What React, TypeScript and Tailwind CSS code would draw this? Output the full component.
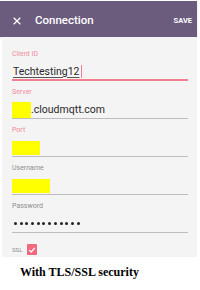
import React from "react";

const FIELDS = [
    { label: "Client ID", kind: "text", value: "Techtesting12", active: true },
    { label: "Server", kind: "server", value: ".cloudmqtt.com" },
    { label: "Port", kind: "box", width: "w-[28px]" },
    { label: "Username", kind: "box", width: "w-[38px]" },
    { label: "Password", kind: "password" },
];

function Field({ field }: { field: (typeof FIELDS)[number] }) {
    const active = !!field.active;
    const pink = active || field.label === "Server" || field.label === "Port";
    return (
        <div className="flex flex-col">
            <div className={"h-[10px] leading-[10px] text-[7px] " + (pink ? "text-[#f28a9a]" : "text-[#8d8d8d]")}>
                {field.label}
            </div>
            <div
                className={
                    "mt-[4px] h-[18px] w-[176px] flex items-center " +
                    (active ? "border-b-2 border-[#f27f8f]" : "border-b-[1.5px] border-[#bdbdbd]")
                }
            >
                {field.kind === "text" && (
                    <span className="ml-[1px] text-[10.5px] leading-[13px] text-[#2a2a2a] underline decoration-[#555] underline-offset-2 border-r border-[#f27f8f] pr-[1px]">
                        {field.value}
                    </span>
                )}
                {field.kind === "server" && (
                    <>
                        <span className="w-[19px] h-[16px] bg-[#ffff00]" />
                        <span className="text-[10.5px] leading-[13px] text-[#2a2a2a]">{field.value}</span>
                    </>
                )}
                {field.kind === "box" && <span className={"h-[14px] bg-[#ffff00] " + field.width} />}
                {field.kind === "password" && (
                    <span className="ml-[2px] flex gap-[2.7px]">
                        {Array.from({ length: 12 }).map((_, i) => (
                            <span key={i} className="w-[3px] h-[3px] rounded-full bg-[#222]" />
                        ))}
                    </span>
                )}
            </div>
        </div>
    );
}

export default function App() {
    return (
        <div className="w-[200px] h-[290px] bg-white overflow-hidden font-['Roboto',sans-serif]">
            {/* Toolbar */}
            <div className="mt-[1px] h-[36px] w-[197px] bg-[#6b5b7d] flex items-center pt-[4px] pl-[13px] pr-[5px] shadow-[0_1px_2px_rgba(0,0,0,0.15)]">
                <svg width="8" height="8" viewBox="0 0 8 8" className="shrink-0">
                    <path d="M0.7 0.7 L7.3 7.3 M7.3 0.7 L0.7 7.3" stroke="white" strokeWidth="1.3" />
                </svg>
                <span className="ml-[14px] text-[11.5px] font-medium text-white">Connection</span>
                <span className="ml-auto text-[7.5px] font-bold text-white">SAVE</span>
            </div>

            {/* Form */}
            <div className="ml-[2px] w-[195px] h-[220px] bg-[#f4f4f4] pt-[12px] pl-[10px] flex flex-col gap-[6px]">
                {FIELDS.map((f) => (
                    <Field key={f.label} field={f} />
                ))}
                <div className="flex items-center gap-[5px] mt-[5px]">
                    <span className="text-[6px] text-[#8d8d8d]">SSL</span>
                    <span className="w-[10px] h-[11px] bg-[#f2687e] rounded-[1px] flex items-center justify-center">
                        <svg width="8" height="8" viewBox="0 0 8 8">
                            <path d="M1.2 4.2 L3.2 6 L6.8 1.8" stroke="white" strokeWidth="1.3" fill="none" />
                        </svg>
                    </span>
                </div>
            </div>

            <div className="mt-[6px] pl-[20px] font-['Liberation_Serif',serif] font-bold text-[12px] text-black">
                With TLS/SSL security
            </div>
        </div>
    );
}
